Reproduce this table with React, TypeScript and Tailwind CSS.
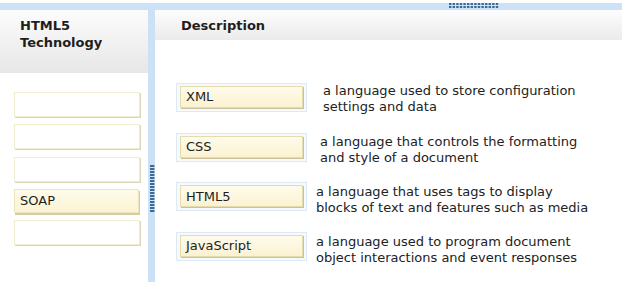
import React from 'react';

const font = { fontFamily: '"DejaVu Sans", Verdana, sans-serif' };

const answers = ['', '', '', 'SOAP', ''];

const rows = [
  { label: 'XML', text: ['a language used to store configuration', 'settings and data'], gap: 'ml-[16px] mt-[0px]' },
  { label: 'CSS', text: ['a language that controls the formatting', 'and style of a document'], gap: 'ml-[13px] mt-[1px]' },
  { label: 'HTML5', text: ['a language that uses tags to display', 'blocks of text and features such as media'], gap: 'ml-[9px] mt-[2px]' },
  { label: 'JavaScript', text: ['a language used to program document', 'object interactions and event responses'], gap: 'ml-[9px] mt-[2px]' },
];

// grip made of small dark-blue dots
const Grip = ({ cols, rows: r }: { cols: number; rows: number }) => (
  <svg width={cols * 3.6} height={r * 3} className="block">
    {Array.from({ length: r }).map((_, y) =>
      Array.from({ length: cols }).map((_, x) => (
        <rect key={`${x}-${y}`} x={x * 3.6} y={y * 3} width="2.4" height="2" fill="#3d6a94" />
      ))
    )}
  </svg>
);

const App = () => {
  return (
    <div className="relative w-[622px] h-[282px] bg-white overflow-hidden text-[#1e1e1e]" style={font}>
      {/* top splitter */}
      <div className="mt-[3px] h-[7px] bg-[#cde2f6]" />
      <div className="absolute left-[449px] top-[3px]">
        <Grip cols={14} rows={2} />
      </div>

      <div className="flex h-[272px]">
        {/* Left column: answer slots */}
        <div className="w-[148px] flex flex-col">
          <div className="h-[63px] bg-gradient-to-b from-[#fcfcfc] to-[#e7e7e7] pl-[20px] pt-[7px] text-[13px] font-bold leading-[17px]">
            HTML5<br />Technology
          </div>
          <div className="flex flex-col gap-[7.3px] pl-[14px] pt-[19px]">
            {answers.map((a, i) =>
              a ? (
                <div
                  key={i}
                  className="w-[125px] h-[24px] border border-[#ece5bd] bg-gradient-to-b from-[#fefbea] to-[#fbf3d3] shadow-[1px_2px_0_#d4cca6] flex items-center pl-[5px] text-[13px]"
                >
                  {a}
                </div>
              ) : (
                <div
                  key={i}
                  className="w-[126px] h-[25px] border border-[#f1edcf] bg-white shadow-[1px_1px_0_#dcd6b8]"
                />
              )
            )}
          </div>
        </div>

        {/* splitter */}
        <div className="relative w-[7px] bg-[#cce1f5]">
          <div className="absolute left-[2px] top-[155px]">
            <Grip cols={1} rows={16} />
          </div>
          <div className="absolute left-[4px] top-[155px]">
            <Grip cols={1} rows={16} />
          </div>
        </div>

        {/* Right column: descriptions */}
        <div className="flex-1 flex flex-col">
          <div className="h-[30px] bg-gradient-to-b from-[#fdfdfd] to-[#ebebeb] pl-[26px] pt-[6px] text-[13px] font-bold">
            Description
          </div>
          <div className="flex flex-col gap-[20.7px] pl-[21px] pt-[43px]">
            {rows.map((r) => (
              <div key={r.label} className="flex items-start h-[29px]">
                <div className="w-[131px] h-[29px] border border-[#dfe9f4] bg-[#f7fafd] pl-[3px] pt-[2px]">
                  <div className="w-[123px] h-[22px] border border-[#e5dcae] bg-gradient-to-b from-[#fefbeb] to-[#fbf2d2] shadow-[1px_1px_0_#cbc29b] flex items-center pl-[5px] text-[13px]">
                    {r.label}
                  </div>
                </div>
                <div className={`${r.gap} text-[13px] leading-[16px] text-[#222]`}>
                  {r.text[0]}<br />{r.text[1]}
                </div>
              </div>
            ))}
          </div>
        </div>
      </div>
    </div>
  );
};

export default App;
